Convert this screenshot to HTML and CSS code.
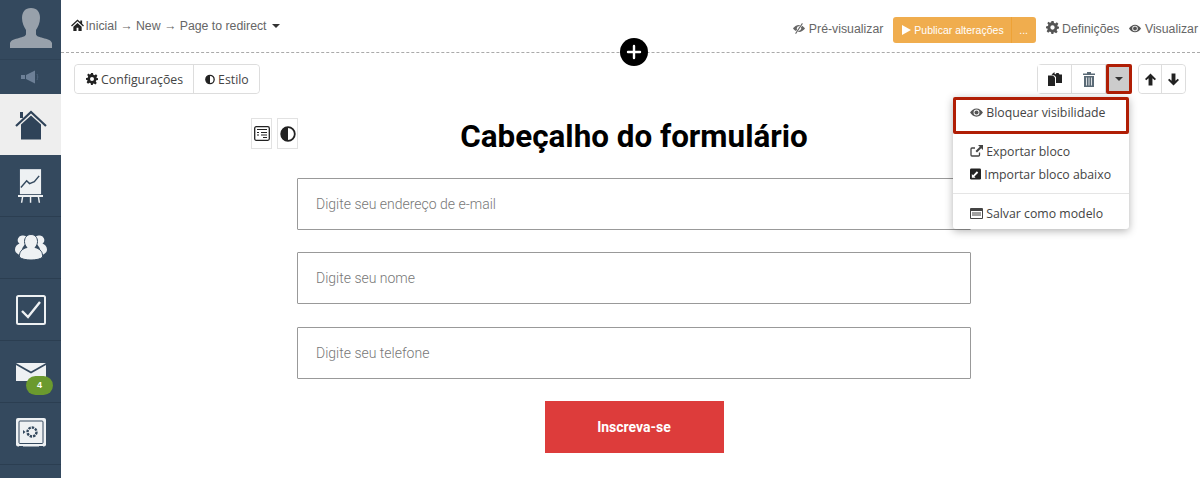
FILE: index.html
```html
<!DOCTYPE html>
<html lang="pt">
<head>
    <meta charset="UTF-8">
    <title>Page to redirect</title>
    <link rel="stylesheet" href="styles.css">
</head>
<body>
    <aside class="sidebar">
        <div class="avatar">
            <svg width="42" height="40" viewBox="0 0 42 40"><path fill="#98a1ab" d="M21 0c-6 0-9 4-9 10 0 5 2 9 4 12v4c0 2-3 3-7 4-4 1-8 2-9 5v5h42v-5c-1-3-5-4-9-5-4-1-7-2-7-4v-4c2-3 4-7 4-12 0-6-3-10-9-10z"/></svg>
        </div>
        <div class="sound">
            <svg width="20" height="14" viewBox="0 0 20 14"><path fill="#6d8097" d="M0 5h4v4H0zM5 5l9-4.500v13L5 9z"/><path fill="none" stroke="#4d647c" d="M16 4c1 2 1 4 0 6"/></svg>
        </div>
        <a class="side-item active">
            <svg width="32" height="30" viewBox="0 0 32 30"><path fill="#2f4359" d="M6 14.500 16 5.500l10 9V29.500H6z"/><path fill="none" stroke="#2f4359" stroke-width="2.200" d="M1 16 16 2l15 14"/><path fill="#2f4359" d="M5 2h3v6H5z"/></svg>
        </a>
        <a class="side-item">
            <svg width="25" height="35" viewBox="0 0 26 36"><path fill="#eef1f3" d="M2 1h22v26H2z"/><path fill="none" stroke="#34495e" stroke-width="1.500" d="M3 20l6-7 3 3 5-2 5-6"/><path fill="#eef1f3" d="M0 28h26v2H0zM4 30h1.500l-1 6H3zM12.300 30h1.500v6h-1.500zM20.500 30H22l1 6h-1.500z"/></svg>
        </a>
        <a class="side-item">
            <svg width="32" height="27" viewBox="0 0 32 27"><path fill="#eef1f3" d="M8 1.500a4.500 4.500 0 0 1 4 7c-4 3-6 7-6 12l-2.500 0C1 19 0 17.500 0 15.500c0-3 2-5 4.500-6a4.500 4.500 0 0 1 3.500-8zM24 1.500a4.500 4.500 0 0 0-4 7c4 3 6 7 6 12l2.500 0c2.500-1.500 3.500-3 3.500-5 0-3-2-5-4.500-6a4.500 4.500 0 0 0-3.500-8z"/><path fill="#eef1f3" stroke="#34495e" d="M16 .5c4 0 6.500 3 6.500 7 0 2.500-1 4.500-2.500 6 4 1 7.500 3.500 7.500 8v1.500c-3 4-20 4-23 0V21.500c0-4.500 3.500-7 7.500-8-1.500-1.500-2.500-3.500-2.500-6 0-4 2.500-7 6.500-7z"/></svg>
        </a>
        <a class="side-item">
            <svg width="30" height="30" viewBox="0 0 30 30"><rect x="1" y="1" width="28" height="28" rx="1.500" fill="none" stroke="#eef1f3" stroke-width="2"/><path fill="none" stroke="#eef1f3" stroke-width="2.400" d="M6 16l6 6L24 7"/></svg>
        </a>
        <a class="side-item">
            <svg width="30" height="18" viewBox="0 0 30 18"><path fill="#eef1f3" d="M0 0h30L15 8.500z"/><path fill="#eef1f3" d="M0 2v16h30V2L15 10.500z"/></svg>
            <span class="badge">4</span>
        </a>
        <a class="side-item">
            <svg width="30" height="31" viewBox="0 0 30 31"><rect width="30" height="28.500" rx="2" fill="#eef1f3"/><rect x="3" y="3" width="24" height="22.500" rx="1" fill="#eef1f3" stroke="#34495e"/><circle cx="16" cy="14" r="4.500" fill="none" stroke="#34495e" stroke-width="2.400" stroke-dasharray="2.400 1"/><path fill="#34495e" d="M7 12v4l2.500-2zM3 28h4v3H3zM23 28h4v3h-4z"/></svg>
        </a>
        <div class="side-item"></div>
    </aside>

    <main class="content">
        <header class="topbar">
            <div class="breadcrumb">
                <svg class="ico home-ico" width="13" height="12" viewBox="0 0 14 13"><path fill="#222" d="M7 0.500 0 7l1 1 6-5.500L13 8l1-1-2-1.900V1.500h-2v1.800zM2.500 8.300 7 4.200l4.500 4.100V13H8V9.500H6V13H2.500z"/></svg>
                <span>Inicial → New → Page to redirect</span>
                <i class="caret dark"></i>
            </div>
            <nav class="top-actions">
                <a class="top-link">
                    <svg class="ico" width="12" height="11" viewBox="0 0 14 12"><path fill="#666" d="M7 2C4 2 1.500 4 0 6c1.500 2 4 4 7 4s5.500-2 7-4c-1.500-2-4-4-7-4z"/><circle cx="7" cy="6" r="2.500" fill="#fff"/><path stroke="#fff" stroke-width="2.500" d="M11 0 3 12"/><path stroke="#666" stroke-width="1.200" d="M11 0 3 12"/></svg>
                    Pré-visualizar
                </a>
                <div class="publish">
                    <span class="publish-main"><i class="play"></i>Publicar alterações</span>
                    <span class="publish-more">...</span>
                </div>
                <a class="top-link">
                    <svg class="ico" width="13" height="13" viewBox="0 0 24 24"><path fill="#555" fill-rule="evenodd" d="M10 0h4l.7 3.400 2.300 1 3-1.900 2.800 2.800-1.900 3 1 2.300L24 10v4l-3.400.7-1 2.300 1.900 3-2.800 2.800-3-1.900-2.300 1L14 24h-4l-.7-3.400-2.300-1-3 1.900-2.800-2.800 1.900-3-1-2.300L0 14v-4l3.400-.7 1-2.300-1.900-3L4.300 1.200l3 1.900 2.300-1zM12 8a4 4 0 1 0 0 8 4 4 0 0 0 0-8z"/></svg>
                    Definições
                </a>
                <a class="top-link">
                    <svg class="ico" width="12" height="11" viewBox="0 0 14 12"><path fill="#555" fill-rule="evenodd" d="M7 1.500C4 1.500 1.500 3.500 0 6c1.500 2.500 4 4.500 7 4.500s5.500-2 7-4.500c-1.500-2.500-4-4.500-7-4.500zM7 2.800a3.200 3.200 0 1 1 0 6.400 3.200 3.200 0 0 1 0-6.400z"/><circle cx="7" cy="6" r="2.200" fill="#555"/></svg>
                    Visualizar
                </a>
            </nav>
            <span class="add-block">
                <svg width="16" height="16" viewBox="0 0 16 16"><path stroke="#fff" stroke-width="2.400" stroke-linecap="round" d="M8 2v12M2 8h12"/></svg>
            </span>
        </header>

        <div class="block-tools">
            <div class="btn-group">
                <button class="btn">
                    <svg class="ico" width="12" height="12" viewBox="0 0 24 24"><path fill="#222" fill-rule="evenodd" d="M10 0h4l.7 3.400 2.300 1 3-1.900 2.800 2.800-1.900 3 1 2.300L24 10v4l-3.400.7-1 2.300 1.900 3-2.800 2.800-3-1.900-2.300 1L14 24h-4l-.7-3.400-2.300-1-3 1.900-2.800-2.800 1.900-3-1-2.300L0 14v-4l3.400-.7 1-2.300-1.900-3L4.300 1.200l3 1.900 2.300-1zM12 8a4 4 0 1 0 0 8 4 4 0 0 0 0-8z"/></svg>
                    Configurações
                </button>
                <button class="btn">
                    <svg class="ico" width="10" height="11" viewBox="0 0 12 12"><circle cx="6" cy="6" r="5" fill="#fff" stroke="#222" stroke-width="1.600"/><path fill="#222" d="M6 1a5 5 0 0 0 0 10z"/></svg>
                    Estilo
                </button>
            </div>
            <div class="tools-right">
                <div class="btn-group">
                    <button class="btn icon-btn">
                        <svg width="14" height="14" viewBox="0 0 14 14"><path fill="#222" d="M0 3.500h5l2 2V14H0z"/><path fill="#222" d="M8.500 1h2l1 1.500H14V11H8V5l-1.500-1.500z"/><path fill="#222" d="M3.500 2.500 6.500 0v1.500L8 3l-1.500.5z"/></svg>
                    </button>
                    <button class="btn icon-btn">
                        <svg width="12" height="15" viewBox="0 0 12 15"><path fill="#5a6a76" d="M4 0h4v1.500h4V3H0V1.500h4zM1 4h10v11H1z"/><path stroke="#fff" stroke-width=".8" d="M3.500 5.500V13.500M6 5.500V13.500M8.500 5.500V13.500"/></svg>
                    </button>
                    <button class="btn caret-btn"><i class="caret dark"></i></button>
                </div>
                <div class="btn-group">
                    <button class="btn arrow-btn">
                        <svg width="11" height="13" viewBox="0 0 13 14"><path fill="#222" d="M6.500 0 13 6.500 11.500 8 8.800 5.500V14H4.200V5.500L1.500 8 0 6.500z"/></svg>
                    </button>
                    <button class="btn arrow-btn">
                        <svg width="11" height="13" viewBox="0 0 13 14"><path fill="#222" d="M6.500 14 13 7.500 11.500 6 8.800 8.500V0H4.200V8.500L1.500 6 0 7.500z"/></svg>
                    </button>
                </div>
                <ul class="menu">
                    <li class="menu-item highlighted">
                        <svg class="ico" width="13" height="11" viewBox="0 0 14 12"><path fill="#555" fill-rule="evenodd" d="M7 1.500C4 1.500 1.500 3.500 0 6c1.500 2.500 4 4.500 7 4.500s5.500-2 7-4.500c-1.500-2.500-4-4.500-7-4.500zM7 2.800a3.200 3.200 0 1 1 0 6.400 3.200 3.200 0 0 1 0-6.400z"/><circle cx="7" cy="6" r="2.200" fill="#555"/></svg>
                        Bloquear visibilidade
                    </li>
                    <li class="menu-item first-link">
                        <svg class="ico" width="13" height="12" viewBox="0 0 13 12"><path fill="none" stroke="#444" stroke-width="1.300" d="M9.500 7.500V10a1 1 0 0 1-1 1H2a1 1 0 0 1-1-1V4a1 1 0 0 1 1-1h3"/><path fill="#444" d="M8 0h5v5l-1.800-1.800L7 7.500 5.500 6l4.300-4.200z"/></svg>
                        Exportar bloco
                    </li>
                    <li class="menu-item">
                        <svg class="ico" width="11" height="12" viewBox="0 0 12 12"><rect width="12" height="12" rx="1.500" fill="#222"/><path fill="#fff" d="M2 10V6l1.400 1.300L7.500 3 9 4.500 4.800 8.700 6 10z"/></svg>
                        Importar bloco abaixo
                    </li>
                    <li class="menu-sep"></li>
                    <li class="menu-item">
                        <svg class="ico" width="13" height="11" viewBox="0 0 13 11"><rect width="13" height="11" rx="1" fill="#444"/><path fill="#fff" d="M1 3h11v7H1z"/><path stroke="#444" d="M2 5h9M2 7h9"/></svg>
                        Salvar como modelo
                    </li>
                </ul>
            </div>
        </div>

        <section class="form-block">
            <div class="form-tools">
                <span class="mini-btn">
                    <svg width="16" height="15" viewBox="0 0 16 15"><rect x=".7" y=".7" width="14.600" height="13.600" rx="1.500" fill="#fff" stroke="#222" stroke-width="1.300"/><path stroke="#222" stroke-width="1.200" d="M3 3.500h10M3 6.500h2M7 6.500h6M3 9h2M7 9h6M9 11.500h4"/></svg>
                </span>
                <span class="mini-btn">
                    <svg width="16" height="16" viewBox="0 0 16 16"><circle cx="8" cy="8" r="6.800" fill="#fff" stroke="#222" stroke-width="1.800"/><path fill="#222" d="M8 1a7 7 0 0 0 0 14z"/></svg>
                </span>
            </div>
            <h1 class="form-title">Cabeçalho do formulário</h1>
            <div class="field">Digite seu endereço de e-mail</div>
            <div class="field">Digite seu nome</div>
            <div class="field">Digite seu telefone</div>
            <button class="submit">Inscreva-se</button>
        </section>
    </main>
</body>
</html>
```

FILE: styles.css
```css
* {
    margin: 0;
    padding: 0;
    box-sizing: border-box;
}

body {
    font-family: 'Liberation Sans', Arial, sans-serif;
    background: #fff;
    height: 478px;
    display: flex;
    overflow: hidden;
}

.ico {
    vertical-align: -1px;
}

.home-ico {
    margin-right: -2px;
}

.caret {
    display: inline-block;
    width: 0;
    height: 0;
    border-left: 4px solid transparent;
    border-right: 4px solid transparent;
    border-top: 4px solid #333;
    vertical-align: 2px;
}

/* sidebar */
.sidebar {
    width: 61px;
    height: 478px;
    flex-shrink: 0;
    background: #34495e;
    display: flex;
    flex-direction: column;
    overflow: hidden;
}

.avatar {
    height: 60px;
    flex-shrink: 0;
    display: flex;
    align-items: flex-end;
    justify-content: center;
    padding-bottom: 11px;
    border-bottom: 1px solid #2e4256;
}

.sound {
    height: 34px;
    flex-shrink: 0;
    display: flex;
    align-items: center;
    justify-content: center;
}

.side-item {
    height: 62px;
    flex-shrink: 0;
    display: flex;
    align-items: center;
    justify-content: center;
    position: relative;
    border-bottom: 1px solid #2b3e51;
}

.side-item.active {
    height: 61px;
    background: #eee;
    border-bottom: none;
}

.badge {
    position: absolute;
    left: 26px;
    top: 35px;
    width: 27px;
    height: 19px;
    border-radius: 10px;
    background: #6b9a2e;
    color: #fff;
    font-size: 9px;
    font-weight: bold;
    line-height: 19px;
    text-align: center;
}

/* top bar */
.content {
    flex: 1;
    min-width: 0;
}

.topbar {
    height: 53px;
    padding: 18px 2px 0 10px;
    border-bottom: 1px dashed #aaa;
    display: flex;
    justify-content: space-between;
    position: relative;
    font-size: 12.3px;
    color: #666;
}

.breadcrumb {
    line-height: 16px;
}

.breadcrumb .caret {
    margin-left: 2px;
}

.top-actions {
    display: flex;
    align-items: flex-start;
    gap: 10px;
    color: #666;
}

.top-link {
    margin-top: 3px;
    line-height: 16px;
    white-space: nowrap;
}

.publish {
    display: flex;
    height: 26px;
    margin-top: -1px;
    border-radius: 3px;
    background: #f0ad4e;
    color: #fff;
    font-size: 10.5px;
    line-height: 27px;
}

.publish-main {
    padding: 0 7px 0 9px;
    border-right: 1px solid #eea236;
    white-space: nowrap;
}

.publish-more {
    width: 24px;
    text-align: center;
}

.play {
    display: inline-block;
    width: 0;
    height: 0;
    border-left: 9px solid #fff;
    border-top: 5px solid transparent;
    border-bottom: 5px solid transparent;
    margin-right: 3px;
    vertical-align: -1px;
}

.add-block {
    position: absolute;
    left: 559px;
    top: 38px;
    width: 28px;
    height: 28px;
    border-radius: 50%;
    background: #000;
    display: flex;
    align-items: center;
    justify-content: center;
}

/* block toolbar */
.block-tools {
    display: flex;
    justify-content: space-between;
    padding: 11px 14px 0 13px;
    height: 41px;
}

.tools-right {
    display: flex;
    gap: 6px;
    position: relative;
}

.btn-group {
    display: flex;
    height: 30px;
    border: 1px solid #ddd;
    border-radius: 4px;
}

.btn {
    height: 28px;
    padding: 0 10px 0 11px;
    border: none;
    border-right: 1px solid #ddd;
    background: #fff;
    font-family: 'Open Sans', sans-serif;
    font-size: 12.3px;
    color: #444;
    display: flex;
    align-items: center;
    gap: 3px;
    border-radius: 4px 0 0 4px;
}

.btn:last-child {
    border-right: none;
    border-radius: 0 4px 4px 0;
}

.icon-btn {
    width: 34px;
    padding: 0;
    justify-content: center;
    border-radius: 0;
}

.arrow-btn {
    width: 23px;
    padding: 0;
    justify-content: center;
}

.caret-btn {
    width: 26px;
    height: 30px;
    margin: -1px -1px -1px 0;
    padding: 0;
    justify-content: center;
    background: #ccc;
}

.caret-btn:last-child {
    border: 3px solid #b01e05;
    border-radius: 2px;
}

.menu {
    position: absolute;
    left: -84px;
    top: 33px;
    width: 176px;
    background: #fff;
    border-radius: 3px;
    box-shadow: 0 2px 8px rgba(0, 0, 0, 0.3);
    list-style: none;
    font-family: 'Open Sans', sans-serif;
    font-size: 12.3px;
    color: #444;
    z-index: 3;
    padding-bottom: 4px;
}

.menu-item {
    height: 23px;
    line-height: 23px;
    padding-left: 17px;
    white-space: nowrap;
}

.menu-item.highlighted {
    height: 37px;
    line-height: 26px;
    border: 3px solid #b01e05;
    border-radius: 2px;
    padding-left: 14px;
}

.menu-item.first-link {
    margin-top: 6px;
}

.menu-sep {
    height: 1px;
    background: #e5e5e5;
    margin: 7px 0 8px;
}

/* form */
.form-block {
    width: 674px;
    margin-left: 236px;
    position: relative;
    display: flex;
    flex-direction: column;
}

.form-tools {
    position: absolute;
    left: -46px;
    top: 24px;
    display: flex;
    gap: 5px;
}

.mini-btn {
    width: 21px;
    height: 31px;
    border: 1px solid #e2e2e2;
    background: #fff;
    display: flex;
    align-items: center;
    justify-content: center;
}

.form-title {
    height: 84px;
    padding-top: 23px;
    font-family: Roboto, sans-serif;
    font-size: 31.4px;
    font-weight: 700;
    line-height: 40px;
    color: #000;
    text-align: center;
}

.field {
    height: 52px;
    margin-bottom: 22.3px;
    padding-left: 18px;
    border: 1px solid #999;
    border-radius: 1px;
    font-family: Roboto, sans-serif;
    font-size: 14px;
    font-weight: 300;
    line-height: 51px;
    color: #777;
}

.submit {
    width: 179px;
    height: 52px;
    align-self: center;
    border: none;
    background: #dd3c3b;
    color: #fff;
    font-family: Roboto, sans-serif;
    font-size: 14px;
    font-weight: 700;
}
```
